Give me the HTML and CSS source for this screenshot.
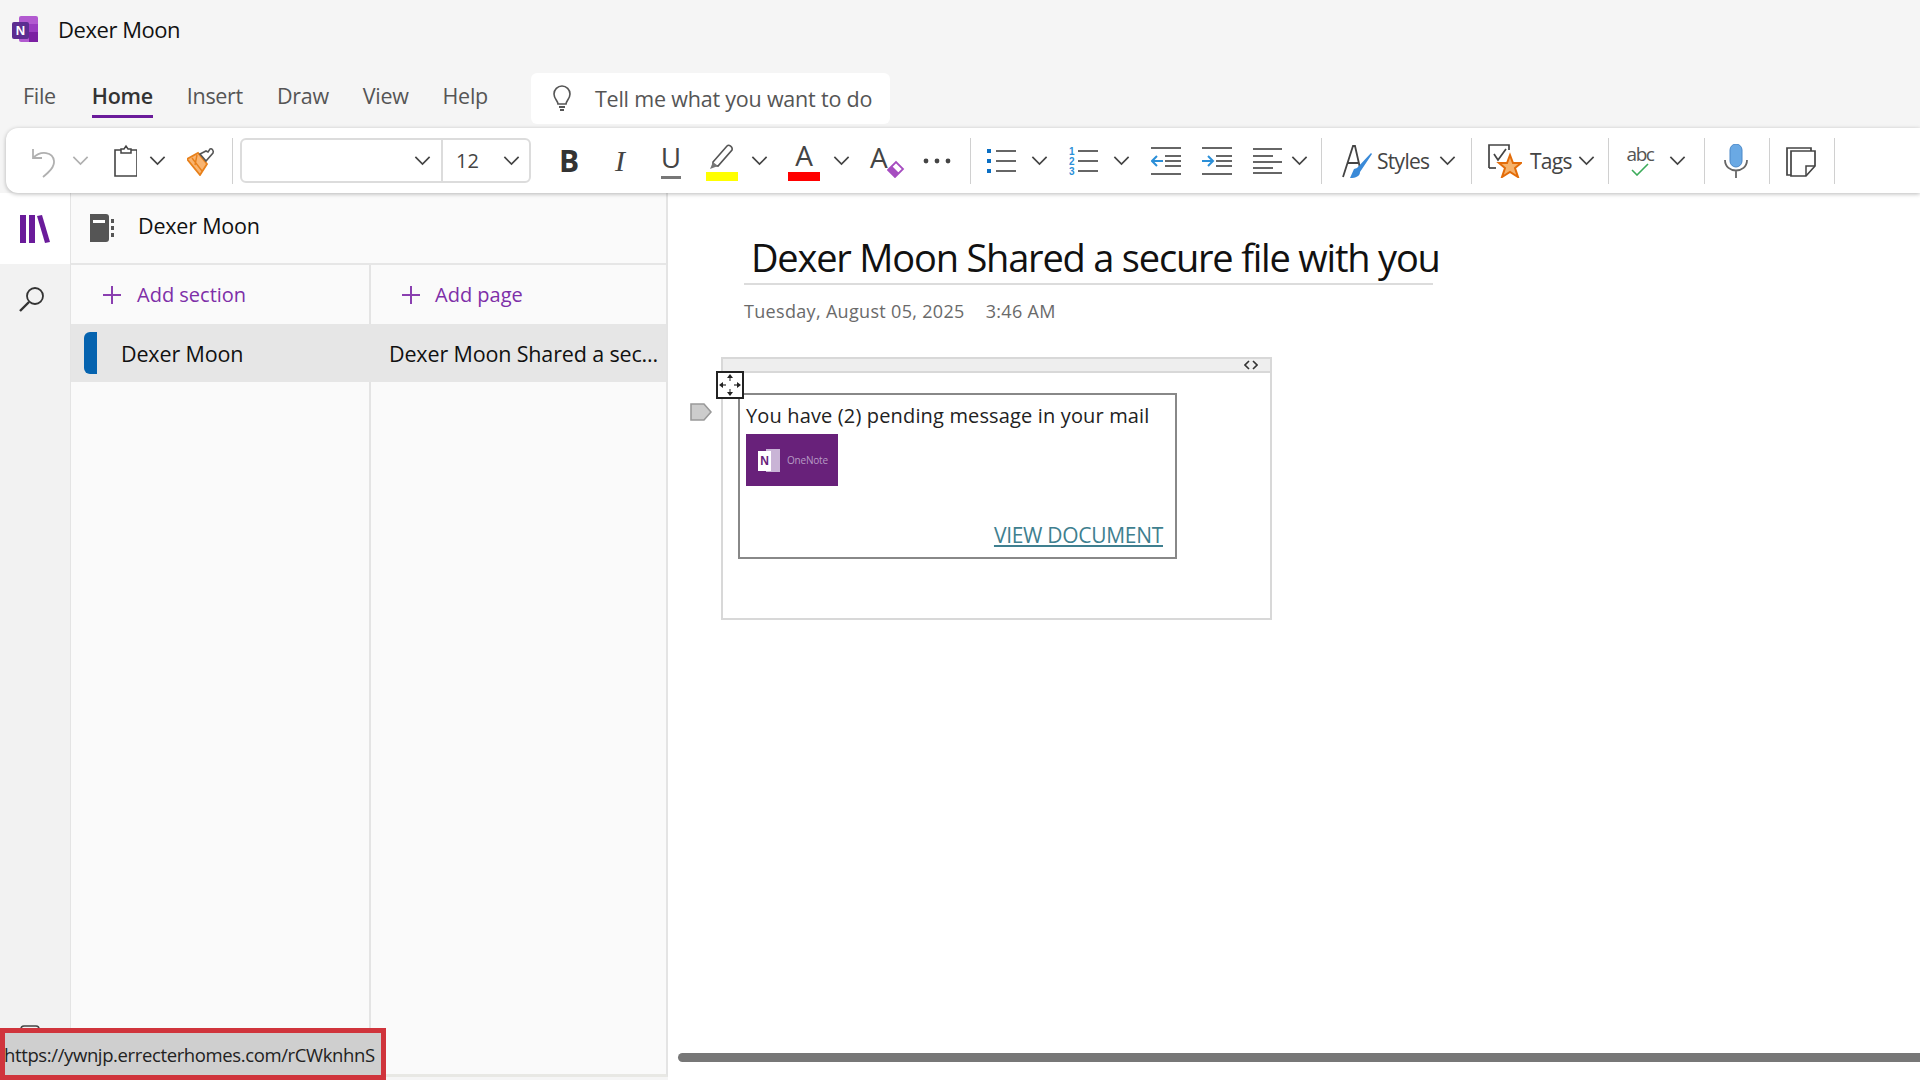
FILE: index.html
```html
<!DOCTYPE html>
<html lang="en">
<head>
<meta charset="utf-8">
<title>Dexer Moon</title>
<link rel="stylesheet" href="styles.css">
</head>
<body>
<svg class="defs" width="0" height="0" aria-hidden="true">
  <symbol id="chev" viewBox="0 0 16 16"><path d="M2 5l6 6 6-6" fill="none" stroke="#444" stroke-width="1.4"/></symbol>
  <symbol id="chev-off" viewBox="0 0 16 16"><path d="M2 5l6 6 6-6" fill="none" stroke="#b0b0b0" stroke-width="1.4"/></symbol>
  <symbol id="plus" viewBox="0 0 20 20"><path d="M10 1v18M1 10h18" stroke="#8a3fb0" stroke-width="2" fill="none"/></symbol>
</svg>
<div class="app">
  <header class="titlebar">
    <svg class="app-logo" viewBox="0 0 26 26">
      <rect x="7" y="0" width="19" height="26" rx="2" fill="#b25ad0"/>
      <rect x="17" y="8" width="9" height="8" fill="#9a3cc0"/>
      <rect x="17" y="16" width="9" height="10" fill="#7b1fa2"/>
      <rect x="0" y="6" width="17" height="17" rx="2" fill="#5c2d91"/>
      <text x="8.5" y="19" class="logo-n">N</text>
    </svg>
    <span class="app-name">Dexer Moon</span>
  </header>
  <nav class="tabs">
    <a class="tab file">File</a>
    <a class="tab active">Home</a>
    <a class="tab">Insert</a>
    <a class="tab">Draw</a>
    <a class="tab">View</a>
    <a class="tab">Help</a>
    <div class="tell">
      <svg class="bulb" viewBox="0 0 20 28"><path d="M6 19c0-3-4-5-4-10a8 8 0 0 1 16 0c0 5-4 7-4 10z" fill="none" stroke="#555" stroke-width="1.6"/><path d="M7 22h6M8 25h4" stroke="#555" stroke-width="2"/></svg>
      <span>Tell me what you want to do</span>
    </div>
  </nav>

  <div class="toolbar">
    <div class="ic"><svg width="30" height="36" viewBox="-2 0 30 36"><path d="M3 6v9h9M3 15c8-8 20-6 21 3 .6 6-5 11-11 16" fill="none" stroke="#b0b0b0" stroke-width="1.8"/></svg></div>
    <div class="chev"><svg><use href="#chev-off"/></svg></div>
    <div class="ic"><svg width="24" height="34" viewBox="-1 0 24 34"><path d="M7 6H1v26h22V6h-6" fill="none" stroke="#444" stroke-width="1.6"/><path d="M7 9V5h3l2-3 2 3h3v4z" fill="#fff" stroke="#444" stroke-width="1.5"/></svg></div>
    <div class="chev tight"><svg><use href="#chev"/></svg></div>
    <div class="ic"><svg width="30" height="30" viewBox="1 0 30 30"><path d="M1 13l11-6 9 11-7 11z" fill="#f9b470" stroke="#e8801a" stroke-width="1.8"/><path d="M6 12l10 13M11 9l-2 10" stroke="#e8801a" stroke-width="1.4"/><path d="M14 8l6 7 7-8c1-2-1-5-3-4l-2 3-2-1z" fill="#fff" stroke="#555" stroke-width="1.6"/></svg></div>
    <div class="sep sm"></div>
    <div class="font-picker">
      <div class="font-name"><svg><use href="#chev"/></svg></div>
      <div class="font-size"><span>12</span><svg><use href="#chev"/></svg></div>
    </div>
    <div class="ic bold-cell"><span class="g-b">B</span></div>
    <div class="ic"><span class="g-i">I</span></div>
    <div class="ic"><span class="g-u">U</span></div>
    <div class="ic"><div class="stack"><svg width="30" height="26" viewBox="0 0 30 26"><path d="M6 18L20 2c2-2 6 1 5 4L11 22l-5-1z" fill="#fff" stroke="#555" stroke-width="1.6"/><path d="M6 18l-3 7 8-3z" fill="#777"/></svg><i class="swatch yellow"></i></div></div>
    <div class="chev"><svg><use href="#chev"/></svg></div>
    <div class="ic"><div class="stack"><span class="g-a">A</span><i class="swatch red"></i></div></div>
    <div class="chev"><svg><use href="#chev"/></svg></div>
    <div class="ic"><div class="eraser-wrap"><span class="g-a">A</span><svg class="eraser" width="18" height="18" viewBox="0 0 18 18"><path d="M1 10l8-8 7 7-8 8z" fill="#fff" stroke="#a64dc0" stroke-width="1.8"/><path d="M1 10l4-4 7 7-4 4z" fill="#a64dc0"/></svg></div></div>
    <div class="ic"><svg width="32" height="8" viewBox="0 0 32 8"><circle cx="5" cy="4" r="2.4" fill="#444"/><circle cx="16" cy="4" r="2.4" fill="#444"/><circle cx="27" cy="4" r="2.4" fill="#444"/></svg></div>
    <div class="sep"></div>
    <div class="ic"><svg width="30" height="28" viewBox="0 0 30 28"><g fill="#0b6fc4"><rect x="0" y="2" width="4" height="4"/><rect x="0" y="12" width="4" height="4"/><rect x="0" y="22" width="4" height="4"/></g><path d="M9 4h20M9 14h20M9 24h20" stroke="#666" stroke-width="2.2"/></svg></div>
    <div class="chev"><svg><use href="#chev"/></svg></div>
    <div class="ic"><svg width="30" height="30" viewBox="0 0 30 30"><g class="num"><text x="0" y="9">1</text><text x="0" y="19">2</text><text x="0" y="29">3</text></g><path d="M9 5h20M9 15h20M9 25h20" stroke="#666" stroke-width="2.2"/></svg></div>
    <div class="chev"><svg><use href="#chev"/></svg></div>
    <div class="ic"><svg width="30" height="30" viewBox="0 0 30 30"><path d="M0 2h30M0 28h30M14 10h16M14 15h16M14 20h16" stroke="#666" stroke-width="2.2"/><path d="M12 15H1m5-5l-5 5 5 5" fill="none" stroke="#2b8fd8" stroke-width="2"/></svg></div>
    <div class="ic"><svg width="30" height="30" viewBox="0 0 30 30"><path d="M0 2h30M0 28h30M14 10h16M14 15h16M14 20h16" stroke="#666" stroke-width="2.2"/><path d="M0 15h11m-5-5l5 5-5 5" fill="none" stroke="#2b8fd8" stroke-width="2"/></svg></div>
    <div class="ic"><svg width="30" height="28" viewBox="0 0 30 28"><path d="M0 2h29M0 9h20M0 15h29M0 21h20M0 26h29" stroke="#666" stroke-width="2.2"/></svg></div>
    <div class="chev tighter"><svg><use href="#chev"/></svg></div>
    <div class="sep sm"></div>
    <div class="label-btn styles-btn">
      <svg class="lead" width="30" height="36" viewBox="0 0 30 36"><path d="M1 34L11 3h2l5 22M6 20h10" fill="none" stroke="#444" stroke-width="1.8"/><path d="M29 10L15 25l-3 1 0 0-4 9c6 0 10-2 10-6l12-18z" fill="#3a8ad8"/></svg>
      <span>Styles</span>
      <svg class="c"><use href="#chev"/></svg>
    </div>
    <div class="sep sm"></div>
    <div class="label-btn tags-btn">
      <svg class="lead" width="34" height="34" viewBox="0 0 34 34"><path d="M1 24V1h20v5" fill="none" stroke="#444" stroke-width="1.7"/><path d="M1 24h7" stroke="#444" stroke-width="1.7"/><path d="M6 10l4 6 8-11" fill="none" stroke="#444" stroke-width="1.7"/><path d="M22 11l3 8 8 0-6 5 3 9-8-5-8 5 3-9-6-5 8 0z" fill="#f6b26b" stroke="#e36c09" stroke-width="2"/></svg>
      <span>Tags</span>
      <svg class="c"><use href="#chev"/></svg>
    </div>
    <div class="sep sm"></div>
    <div class="ic"><div class="abc"><span>abc</span><svg width="18" height="13" viewBox="0 0 18 13"><path d="M1 7l5 5L17 1" fill="none" stroke="#3cab5a" stroke-width="1.6"/></svg></div></div>
    <div class="chev"><svg><use href="#chev"/></svg></div>
    <div class="sep"></div>
    <div class="ic"><svg width="24" height="34" viewBox="0 0 24 34"><rect x="6" y="0" width="12" height="23" rx="6" fill="#6aa9e4" stroke="#4a88c8"/><path d="M1 16c0 14 22 14 22 0M12 27v7" fill="none" stroke="#666" stroke-width="1.8"/></svg></div>
    <div class="sep"></div>
    <div class="ic"><svg width="30" height="32" viewBox="0 0 30 32"><path d="M5 30H1V3h24v3" fill="none" stroke="#444" stroke-width="1.7"/><path d="M5 6h24v15l-9 10H5z" fill="#fff" stroke="#444" stroke-width="1.7"/><path d="M20 31v-10h9" fill="none" stroke="#444" stroke-width="1.5"/></svg></div>
    <div class="sep"></div>
  </div>

  <main class="workspace">
    <aside class="rail">
      <div class="rail-top"><svg width="30" height="28" viewBox="0 0 30 28"><g fill="#6a1b9a"><rect x="0" y="0" width="6" height="28"/><rect x="9" y="0" width="6" height="28"/><path d="M17 1l5-1 8 27-5 1z"/></g></svg></div>
      <div class="rail-search"><svg width="28" height="28" viewBox="0 0 28 28"><circle cx="17" cy="11" r="8" fill="none" stroke="#333" stroke-width="1.8"/><path d="M11 17L2 26" stroke="#333" stroke-width="2.4"/></svg></div>
    </aside>
    <section class="nav">
      <div class="nb-head">
        <svg width="26" height="28" viewBox="0 0 26 28"><path d="M2 0h16a3 3 0 0 1 3 3v22a3 3 0 0 1-3 3H2z" fill="#555"/><rect x="5" y="6" width="12" height="3" fill="#fff"/><g fill="#555"><rect x="23" y="5" width="3" height="4"/><rect x="23" y="12" width="3" height="4"/><rect x="23" y="19" width="3" height="4"/></g></svg>
        <span>Dexer Moon</span>
      </div>
      <div class="cols">
        <div class="col sections">
          <div class="add"><svg width="20" height="20"><use href="#plus"/></svg><span>Add section</span></div>
          <div class="row sel"><i class="sec-tab"></i><span>Dexer Moon</span></div>
        </div>
        <div class="col pages">
          <div class="add"><svg width="20" height="20"><use href="#plus"/></svg><span>Add page</span></div>
          <div class="row sel"><span>Dexer Moon Shared a sec...</span></div>
        </div>
      </div>
    </section>
    <section class="page">
      <h1 class="page-title">Dexer Moon Shared a secure file with you</h1>
      <div class="page-date"><span>Tuesday, August 05, 2025</span><span>3:46 AM</span></div>
      <div class="note">
        <svg class="tag-mark" width="22" height="18" viewBox="0 0 22 18"><path d="M1 1h13l7 8-7 8H1z" fill="#ccc" stroke="#999" stroke-width="1.6"/></svg>
        <div class="note-bar"><svg width="14" height="10" viewBox="0 0 14 10"><path d="M5 1L1 5l4 4M9 1l4 4-4 4" fill="none" stroke="#333" stroke-width="1.6"/></svg></div>
        <div class="move"><svg width="24" height="24" viewBox="0 0 24 24"><path d="M12 1L9 5h6zM12 23l-3-4h6zM1 12l4-3v6zM23 12l-4-3v6z" fill="#222"/><path d="M12 5v3M12 16v3M5 12h3M16 12h3" stroke="#555" stroke-width="1.3"/></svg></div>
        <div class="msg">
          <p class="msg-text">You have (2) pending message in your mail</p>
          <div class="brand">
            <svg width="24" height="25" viewBox="0 0 24 25"><rect x="9" y="1" width="14" height="23" fill="#c9b4d6"/><rect x="1" y="3" width="13" height="20" fill="#fff"/><text x="7.5" y="17" class="brand-n">N</text></svg>
            <span>OneNote</span>
          </div>
          <a class="view">VIEW DOCUMENT</a>
        </div>
      </div>
      <div class="hscroll"></div>
    </section>
  </main>

  <svg class="peek" width="20" height="20" viewBox="0 0 20 20"><rect x="1" y="1" width="18" height="18" rx="3" fill="none" stroke="#444" stroke-width="1.6"/></svg>
  <div class="url-tip"><span>https://ywnjp.errecterhomes.com/rCWknhnS</span></div>
</div>
</body>
</html>
```
FILE: styles.css
```css
* { box-sizing: border-box; }
html, body { margin: 0; padding: 0; }
body { font-family: "Open Sans", "Noto Sans", sans-serif; background: #fff; color: #111; }
.defs { position: absolute; }
.app { position: relative; width: 1920px; height: 1080px; overflow: hidden; background: #f5f5f5; display: flex; flex-direction: column; }

.titlebar { height: 58px; display: flex; align-items: center; padding-left: 12px; flex: none; }
.app-logo { width: 26px; height: 26px; }
.logo-n { font: bold 13px "Liberation Sans", sans-serif; fill: #fff; text-anchor: middle; }
.app-name { margin-left: 20px; font-size: 22px; letter-spacing: -0.45px; color: #111; }

.tabs { height: 70px; flex: none; display: flex; align-items: flex-start; position: relative; padding-left: 23px; }
.tab { font-size: 21.5px; color: #555; letter-spacing: -0.3px; height: 60px; padding-top: 24px; line-height: 28px; margin-right: 34px; }
.tab.file { margin-right: 36px; }
.tab.active { color: #333; font-weight: 600; position: relative; }
.tab.active::after { content: ""; position: absolute; left: 0; right: 0; top: 57px; height: 3px; background: #6a1b9a; }
.tell { margin-left: 9px; margin-top: 15px; width: 359px; height: 51px; background: #fff; border-radius: 6px; display: flex; align-items: center; padding-left: 21px; gap: 23px; font-size: 21.5px; letter-spacing: -0.2px; color: #555; white-space: nowrap; }
.bulb { width: 20px; height: 28px; flex: none; }

.toolbar { position: relative; z-index: 2; flex: none; height: 65px; margin-left: 6px; background: #fff; border-radius: 12px 0 0 12px; box-shadow: 0 1px 4px rgba(0,0,0,.28); display: flex; align-items: center; gap: 5px; padding-left: 17px; }
.ic { width: 40px; height: 44px; margin-left: 6px; display: flex; align-items: center; justify-content: center; flex: none; }
.ic:first-child { margin-left: 0; }
.chev { width: 24px; height: 20px; margin-right: 2px; display: flex; align-items: center; justify-content: center; flex: none; }
.chev svg, .font-picker svg, .label-btn .c { width: 19px; height: 19px; flex: none; }
.chev.tight { margin-left: -5px; }
.chev.tighter { margin-left: -6px; margin-right: 0; }
.sep { width: 1px; height: 46px; background: #d0d0d0; margin-left: 8px; flex: none; }
.sep.sm { margin-left: 5px; }
.font-picker { margin-left: 2px; width: 291px; height: 45px; border: 2px solid #dcdcdc; border-radius: 6px; display: flex; flex: none; }
.font-name { width: 201px; border-right: 2px solid #dcdcdc; display: flex; align-items: center; justify-content: flex-end; padding-right: 9px; }
.font-size { flex: 1; display: flex; align-items: center; justify-content: space-between; padding: 0 8px 0 13px; font-size: 20px; color: #444; }
.bold-cell { margin-left: 13px; }
.g-b { font: bold 30px "Open Sans", sans-serif; color: #333; line-height: 1; }
.g-i { font: italic 30px "Liberation Serif", serif; color: #444; line-height: 1; }
.g-u { font: 28px "Open Sans", sans-serif; color: #444; line-height: 1; border-bottom: 3px solid #777; padding-bottom: 0; height: 36px; }
.g-a { font: 28px "Open Sans", sans-serif; color: #444; line-height: 28px; display: block; }
.stack { width: 34px; height: 40px; display: flex; flex-direction: column; align-items: center; justify-content: flex-end; }
.swatch { display: block; height: 9px; width: 32px; flex: none; }
.swatch.yellow { background: #ffff00; margin-top: 2px; }
.swatch.red { background: #ff0000; margin-top: 3px; }
.eraser-wrap { position: relative; width: 32px; height: 36px; }
.eraser { position: absolute; left: 17px; top: 17px; }
.num text { font: bold 10px "Liberation Sans", sans-serif; fill: #2b8fd8; }
.label-btn { display: flex; align-items: center; flex: none; font-size: 21px; letter-spacing: -0.7px; color: #444; }
.styles-btn { margin-left: 0; width: 134px; padding-left: 15px; }
.styles-btn span { margin-left: 5px; width: 55px; }
.styles-btn .c { margin-left: 6px; }
.tags-btn { width: 121px; padding-left: 11px; }
.tags-btn span { margin-left: 8px; width: 42px; }
.tags-btn .c { margin-left: 5px; }
.abc { display: flex; flex-direction: column; align-items: center; font: 19px/18px "Open Sans", sans-serif; letter-spacing: -1.5px; color: #555; }

.workspace { flex: 1; display: flex; min-height: 0; }
.rail { width: 70px; flex: none; background: #f2f2f2; }
.rail-top { height: 71px; background: #fff; display: flex; align-items: center; justify-content: center; }
.rail-search { height: 70px; display: flex; align-items: center; justify-content: center; padding-right: 6px; }
.nav { width: 598px; flex: none; background: #fafafa; display: flex; flex-direction: column; border-right: 2px solid #e4e4e4; border-left: 1px solid #e4e4e4; border-bottom: 3px solid #e8e8e4; margin-bottom: 3px; }
.nb-head { height: 72px; display: flex; align-items: center; padding-left: 17px; gap: 24px; border-bottom: 2px solid #e6e6e6; font-size: 21.5px; letter-spacing: -0.2px; flex: none; }
.nb-head span { margin-bottom: 5px; }
.cols { flex: 1; display: flex; }
.col { display: flex; flex-direction: column; }
.sections { width: 300px; border-right: 2px solid #e4e4e4; }
.pages { flex: 1; }
.add { height: 59px; display: flex; align-items: center; color: #7e2fa8; font-size: 20px; letter-spacing: 0; flex: none; }
.sections .add { padding-left: 31px; gap: 15px; }
.pages .add { padding-left: 30px; gap: 14px; }
.row { height: 58px; background: #e6e6e6; display: flex; align-items: center; font-size: 21.5px; letter-spacing: -0.15px; white-space: nowrap; flex: none; }
.sections .row { padding-left: 13px; margin-right: -2px; }
.pages .row { padding-left: 18px; }
.sec-tab { width: 13px; height: 42px; background: #0563af; border-radius: 6px 0 0 6px; flex: none; margin-right: 24px; }

.page { flex: 1; background: #fff; position: relative; padding: 68px 0 0 76px; }
.page-title { width: 689px; padding-left: 7px; font-size: 38px; font-weight: 400; line-height: 46px; letter-spacing: -1.2px; white-space: nowrap; color: #111; margin: -27px 0 0; height: 51px; border-bottom: 2px solid #dcdcdc; }
.page-date { margin: 13px 0 0; display: flex; gap: 21px; font-size: 18px; letter-spacing: 0.32px; color: #6a6a6a; line-height: 26px; }
.note { position: relative; margin: 33px 0 0 -23px; width: 551px; height: 263px; border: 2px solid #d8d8d8; }
.note-bar { height: 14px; background: #eeeeee; border-bottom: 2px solid #d8d8d8; display: flex; align-items: center; justify-content: flex-end; padding-right: 12px; }
.tag-mark { position: absolute; left: -33px; top: 44px; }
.move { position: absolute; left: -7px; top: 12px; width: 28px; height: 28px; border: 2px solid #222; background: #fff; z-index: 2; display: flex; align-items: center; justify-content: center; }
.msg { position: absolute; left: 15px; top: 34px; width: 439px; height: 166px; border: 2px solid #888; padding: 7px 0 0 6px; }
.msg-text { margin: 0; font-size: 20px; letter-spacing: 0.15px; line-height: 28px; color: #222; white-space: nowrap; }
.brand { margin-top: 4px; width: 92px; height: 52px; background: #68217a; display: flex; align-items: center; padding-left: 11px; gap: 6px; color: #b79ac4; font-size: 10px; letter-spacing: -0.2px; }
.brand-n { font: bold 12px "Liberation Sans", sans-serif; fill: #68217a; text-anchor: middle; }
.view { position: absolute; right: 12px; top: 126px; font-size: 21px; letter-spacing: -0.3px; color: #3f7f8f; text-decoration: underline; line-height: 28px; }
.hscroll { position: absolute; left: 10px; right: 0; bottom: 18px; height: 9px; background: #777; border-radius: 5px 0 0 5px; }

.peek { position: absolute; left: 20px; top: 1025px; }
.url-tip { position: absolute; left: 0; bottom: 0; width: 386px; height: 52px; border: 5px solid #d0343c; background: #cfcfcf; display: flex; align-items: center; font-size: 18.5px; letter-spacing: -0.38px; color: #222; white-space: nowrap; overflow: hidden; }
.url-tip span { margin-left: -1px; }
```
